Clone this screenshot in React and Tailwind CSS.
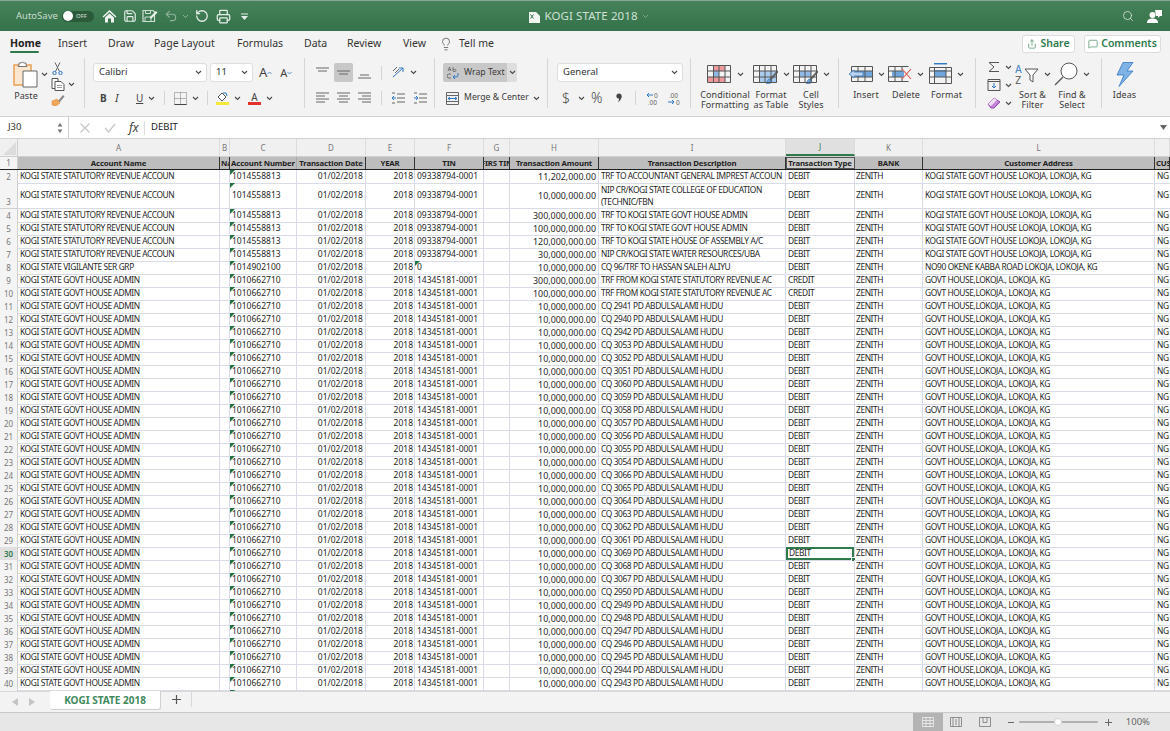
import { Save, Printer, Undo2, RotateCcw, Search, Share, MessageSquare, Lightbulb } from 'lucide-react';

const GRID = 'grid grid-cols-[18px_202px_10px_67px_69px_49px_69px_26px_89px_187px_69px_68px_232px_15px]';
const UI = "font-['Inter','Liberation_Sans',sans-serif]";
const LABEL = "font-['Roboto','Liberation_Sans',sans-serif] text-[9px] leading-[10px] text-[#3a3a3a] text-center tracking-[0.1px]";

const STAT = 'KOGI STATE STATUTORY REVENUE ACCOUN';
const ADMIN = 'KOGI STATE GOVT HOUSE ADMIN';
const LOK1 = 'KOGI STATE GOVT HOUSE LOKOJA, LOKOJA, KG';
const LOK2 = 'GOVT HOUSE,LOKOJA., LOKOJA, KG';

const cheques = [2941, 2940, 2942, 3053, 3052, 3051, 3060, 3059, 3058, 3057, 3056, 3055, 3054, 3066, 3065, 3064, 3063, 3062, 3061, 3069, 3068, 3067, 2950, 2949, 2948, 2947, 2946, 2945, 2944, 2943];

const rows = [
  { n: 2, a: STAT, c: '1014558813', f: '09338794-0001', h: '11,202,000.00', i: 'TRF TO ACCOUNTANT GENERAL IMPREST ACCOUN', j: 'DEBIT', l: LOK1 },
  { n: 3, a: STAT, c: '1014558813', f: '09338794-0001', h: '10,000,000.00', i: 'NIP CR/KOGI STATE COLLEGE OF EDUCATION (TECHNIC/FBN', j: 'DEBIT', l: LOK1, tall: true },
  { n: 4, a: STAT, c: '1014558813', f: '09338794-0001', h: '300,000,000.00', i: 'TRF TO KOGI STATE GOVT HOUSE ADMIN', j: 'DEBIT', l: LOK1 },
  { n: 5, a: STAT, c: '1014558813', f: '09338794-0001', h: '100,000,000.00', i: 'TRF TO KOGI STATE GOVT HOUSE ADMIN', j: 'DEBIT', l: LOK1 },
  { n: 6, a: STAT, c: '1014558813', f: '09338794-0001', h: '120,000,000.00', i: 'TRF TO KOGI STATE HOUSE OF ASSEMBLY A/C', j: 'DEBIT', l: LOK1 },
  { n: 7, a: STAT, c: '1014558813', f: '09338794-0001', h: '30,000,000.00', i: 'NIP CR/KOGI STATE WATER RESOURCES/UBA', j: 'DEBIT', l: LOK1 },
  { n: 8, a: 'KOGI STATE VIGILANTE SER GRP', c: '1014902100', f: '0', h: '10,000,000.00', i: 'CQ 96/TRF TO HASSAN SALEH ALIYU', j: 'DEBIT', l: 'NO90 OKENE KABBA ROAD LOKOJA, LOKOJA, KG', tinFlag: true },
  { n: 9, a: ADMIN, c: '1010662710', f: '14345181-0001', h: '300,000,000.00', i: 'TRF FROM KOGI STATE STATUTORY REVENUE AC', j: 'CREDIT', l: LOK2 },
  { n: 10, a: ADMIN, c: '1010662710', f: '14345181-0001', h: '100,000,000.00', i: 'TRF FROM KOGI STATE STATUTORY REVENUE AC', j: 'CREDIT', l: LOK2 },
  ...cheques.map((q, idx) => ({
    n: idx + 11, a: ADMIN, c: '1010662710', f: '14345181-0001', h: '10,000,000.00',
    i: `CQ ${q} PD ABDULSALAMI HUDU`, j: 'DEBIT', l: LOK2,
  })),
  { n: 41, a: ADMIN, c: '1010662710', f: '14345181-0001', h: '10,000,000.00', i: 'CQ 2939 PD ABDULSALAMI HUDU', j: 'DEBIT', l: LOK2 },
];

const letters = ['A', 'B', 'C', 'D', 'E', 'F', 'G', 'H', 'I', 'J', 'K', 'L', ''];
const titles = ['Account Name', 'Name', 'Account Number', 'Transaction Date', 'YEAR', 'TIN', 'FIRS TIN', 'Transaction Amount', 'Transaction Description', 'Transaction Type', 'BANK', 'Customer Address', 'CUSTOMER'];

const Caret = ({ className = '' }) => (
  <svg width="7" height="5" viewBox="0 0 7 5" fill="none" className={`shrink-0 ${className}`}>
    <path d="M1 1l2.5 2.5L6 1" stroke="#4a4a4a" strokeWidth="1.1" />
  </svg>
);

const Ico = ({ w, h, children, className = '' }) => (
  <svg width={w} height={h} viewBox={`0 0 ${w} ${h}`} fill="none" className={`shrink-0 ${className}`}>{children}</svg>
);

const Lines = ({ rows: ys, className = '' }) => (
  <Ico w={13} h={14} className={className}>
    {ys.map(([y, x1, x2]) => <path key={y} d={`M${x1} ${y}H${x2}`} stroke="#666" strokeWidth="1" />)}
  </Ico>
);

const TableIcon = ({ children }) => (
  <Ico w={25} h={20}>
    {children}
    <path d="M.5 1.5h23v17H.5zM.5 7h23M.5 13h23M6.5 1.5v17M12 1.5v17M18 1.5v17" stroke="#555" strokeWidth="1" />
  </Ico>
);

const Brush = () => (
  <g>
    <path d="M25 7L17 16" stroke="#666" strokeWidth="2" />
    <path d="M17 15c-2 0-3 2-3.5 5 3 0 5-1 5.500-3z" fill="#6ba3dc" stroke="#3a78b8" strokeWidth=".7" />
  </g>
);

const BigTool = ({ width, label, icon }) => (
  <div className={`flex flex-col items-center ${width}`}>
    <div className="flex items-center gap-[5px] h-[28px] pt-[4px] shrink-0">
      {icon}
      <Caret />
    </div>
    <div className={`${LABEL} mt-[4px] shrink-0`}>{label}</div>
  </div>
);

const TitleBar = () => (
  <div className="h-[31px] shrink-0 border-t border-[#86a892] bg-gradient-to-b from-[#47815a] to-[#33724a] flex items-center text-[#e4eee7]">
    <div className="flex-1 flex items-center pl-[16px]">
      <span className={`${UI} text-[9.5px] text-[#c9dccf] w-[46px]`}>AutoSave</span>
      <div className="w-[32px] h-[11px] rounded-full bg-[#2b5a3b] flex items-center pl-[1px]">
        <div className="w-[10px] h-[10px] rounded-full bg-white" />
        <span className={`${UI} text-[6px] ml-[3px] text-[#c9dccf] font-medium`}>OFF</span>
      </div>
      <Ico w={15} h={14} className="ml-[8px]">
        <path d="M7.500 1L.5 7.500l1 1L7.500 3l6 5.500 1-1z" fill="#f0f5f2" />
        <path d="M3 8.500L7.500 4.500 12 8.500V13.500H9V9.500H6v4H3z" fill="#f0f5f2" />
      </Ico>
      <Save size={14} strokeWidth={2} className="ml-[6px]" />
      <Ico w={16} h={14} className="ml-[5px]">
        <path d="M1 1.500h10l1.500 1.500v9.500H1z" stroke="#cfdfd4" strokeWidth="1.200" />
        <path d="M3 8h6v4.500H3zM3.500 1.500v3h5v-3" stroke="#cfdfd4" />
        <path d="M8 8l6-6 1.500 1.500-6 6H8z" fill="#e9f1ec" />
      </Ico>
      <Undo2 size={14} strokeWidth={2} className="ml-[6px] text-[#8fb29c]" />
      <Ico w={7} h={5} className="ml-[4px]"><path d="M1 1l2.500 2.500L6 1" stroke="#8fb29c" /></Ico>
      <RotateCcw size={14} strokeWidth={2.2} className="ml-[6px]" />
      <Printer size={15} strokeWidth={2} className="ml-[7px]" />
      <Ico w={7} h={7} className="ml-[10px]">
        <path d="M0 1h7" stroke="#e4eee7" /><path d="M0 3h7L3.500 7z" fill="#e4eee7" />
      </Ico>
    </div>
    <div className="flex items-center gap-[4px] justify-center">
      <Ico w={11} h={13}>
        <path d="M0 2h7l4 4v7H0z" fill="#f2f6f3" />
        <path d="M1.500 4.500l3 4M4.500 4.500l-3 4" stroke="#33724a" />
      </Ico>
      <span className={`${UI} text-[11.5px] text-[#cfe0d5] tracking-[0.1px]`}>KOGI STATE 2018</span>
      <Ico w={7} h={5}><path d="M1 1l2.500 2.500L6 1" stroke="#7fa68d" /></Ico>
    </div>
    <div className="flex-1 flex items-center justify-end pr-[8px] gap-[13px]">
      <Search size={12} strokeWidth={1.5} />
      <Ico w={15} h={15}>
        <circle cx="5.500" cy="6" r="3" fill="#fff" />
        <path d="M0 14c0-3.500 2.500-4.500 5.500-4.500S11 10.500 11 14z" fill="#fff" />
        <path d="M8 1h7v6h-2l-2 2V7H9z" fill="#fff" />
      </Ico>
    </div>
  </div>
);

const Tabs = () => {
  const tabs = [
    ['Home', 'w-[29px] ml-[10px]'],
    ['Insert', 'w-[30px] ml-[19px]'],
    ['Draw', 'w-[26px] ml-[20px]'],
    ['Page Layout', 'w-[62px] ml-[20px]'],
    ['Formulas', 'w-[46px] ml-[21px]'],
    ['Data', 'w-[23px] ml-[21px]'],
    ['Review', 'w-[35px] ml-[20px]'],
    ['View', 'w-[23px] ml-[21px]'],
  ];
  return (
    <div className={`h-[25px] flex items-center ${UI} text-[10.5px] text-[#333] bg-[#f3f3f3]`}>
      {tabs.map(([name, cls], i) => (
        <div key={name} className={`relative whitespace-nowrap ${cls} ${i === 0 ? 'font-bold text-[#222]' : ''}`}>
          {name}
          {i === 0 && <div className="absolute left-0 right-0 top-[15px] h-[2px] rounded-full bg-[#2f7a4c]" />}
        </div>
      ))}
      <Lightbulb size={14} strokeWidth={1.2} className="ml-[13px] text-[#444]" />
      <span className="ml-[6px]">Tell me</span>
      <div className="ml-auto mr-[9px] flex gap-[9px] text-[#2f7a4c] font-semibold">
        <div className="w-[53px] h-[18px] rounded-[3px] border border-[#dcdcdc] bg-white flex items-center justify-center gap-[3px]">
          <Share size={10} strokeWidth={1.5} />Share
        </div>
        <div className="w-[77px] h-[18px] rounded-[3px] border border-[#dcdcdc] bg-white flex items-center justify-center gap-[3px]">
          <MessageSquare size={10} strokeWidth={1.5} />Comments
        </div>
      </div>
    </div>
  );
};

const Select = ({ text, width }) => (
  <div className={`${width} h-[19px] rounded-[3px] bg-white border border-[#dedede] flex items-center justify-between pl-[5px] pr-[4px] ${UI} text-[9.5px] text-[#333]`}>
    {text}<Caret />
  </div>
);

const VLine = ({ className = '' }) => <div className={`w-px h-[14px] bg-[#d4d4d4] shrink-0 ${className}`} />;

const ClipboardGroup = () => (
  <div className="w-[85px] h-[50px] border-r border-[#d6d6d6] shrink-0 flex">
    <div className="pl-[13px] w-[49px] shrink-0">
      <div className="flex items-center gap-[3px] mt-[3px]">
        <Ico w={25} h={27}>
          <path d="M1 4h17v20H1z" fill="#fbe7cf" stroke="#e8a155" strokeWidth="1.500" />
          <path d="M6 4V2h2a2 2 0 0 1 3 0h2v2l1 1.500H5z" fill="#fff" stroke="#777" />
          <path d="M10 10h14v16H10z" fill="#fff" stroke="#666" />
        </Ico>
        <Caret />
      </div>
      <div className={`${LABEL} w-[26px] mt-[3px]`}>Paste</div>
    </div>
    <div className="flex flex-col pl-[2px] pt-[4px] gap-[3px]">
      <Ico w={11} h={13} className="ml-[1px]">
        <path d="M3 .5l4.500 9M8 .5L3.500 9.500" stroke="#666" />
        <circle cx="2.500" cy="11" r="1.700" stroke="#2f78c4" />
        <circle cx="8.500" cy="11" r="1.700" stroke="#2f78c4" />
      </Ico>
      <div className="flex items-center gap-[3px]">
        <Ico w={14} h={13}>
          <path d="M1 .5h6v10H1z" fill="#fff" stroke="#555" />
          <path d="M4 3.500h6l3 3v6H4z" fill="#fff" stroke="#555" />
          <path d="M6 7.500h5M6 9.500h5" stroke="#888" strokeWidth=".8" />
        </Ico>
        <Caret />
      </div>
      <Ico w={14} h={12}>
        <path d="M7 7l5-6 1.500 1.500-5 6z" fill="#888" />
        <path d="M1 7l5-2 3 4-4 3H2l1-2-2 1z" fill="#f0a85c" stroke="#d98432" strokeWidth=".5" />
      </Ico>
    </div>
  </div>
);

const FontGroup = () => (
  <div className="w-[220px] h-[50px] border-r border-[#d6d6d6] shrink-0 pl-[8px] pt-[5px]">
    <div className="flex items-center">
      <Select text="Calibri" width="w-[114px]" />
      <Select text="11" width="w-[43px] ml-[3px]" />
      <span className={`${UI} text-[13px] text-[#444] ml-[6px] leading-none`}>A</span>
      <Ico w={5} h={4}><path d="M.5 3l2-2 2 2" stroke="#2f78c4" strokeWidth=".8" /></Ico>
      <span className={`${UI} text-[11px] text-[#444] ml-[8px] leading-none`}>A</span>
      <Ico w={5} h={4}><path d="M.5 1l2 2 2-2" stroke="#2f78c4" strokeWidth=".8" /></Ico>
    </div>
    <div className={`flex items-center mt-[8px] h-[16px] pl-[7px] ${UI} text-[#444]`}>
      <span className="text-[10px] font-bold w-[15px]">B</span>
      <span className="text-[11px] italic w-[21px] font-['Liberation_Serif',serif]">I</span>
      <span className="text-[10px] underline w-[11px]">U</span>
      <Caret className="ml-[1px]" />
      <VLine className="ml-[9px]" />
      <Ico w={13} h={13} className="ml-[9px]">
        <path d="M.5.5h12v12H.5zM6.500.5v12M.5 6.500h12" stroke="#777" strokeDasharray="1 1" />
        <path d="M.5 12.500h12" stroke="#444" />
      </Ico>
      <Caret className="ml-[5px]" />
      <VLine className="ml-[8px]" />
      <div className="ml-[8px] w-[13px] flex flex-col items-center">
        <Ico w={13} h={10}>
          <path d="M2 5l4-4 4 4-4 4z" fill="#fff" stroke="#555" />
          <path d="M7 1h3l1 3" stroke="#2f78c4" />
        </Ico>
        <div className="w-[13px] h-[3px] bg-[#f5e63a]" />
      </div>
      <Caret className="ml-[5px]" />
      <div className="ml-[7px] w-[13px] flex flex-col items-center">
        <span className="text-[10px] leading-[10px]">A</span>
        <div className="w-[13px] h-[3px] bg-[#e4312b]" />
      </div>
      <Caret className="ml-[5px]" />
    </div>
  </div>
);

const AlignGroup = () => (
  <div className="w-[130px] h-[50px] border-r border-[#d6d6d6] shrink-0 pl-[11px] pt-[5px]">
    <div className="flex items-center h-[19px]">
      <Lines rows={[[2, 0, 13], [5, 2, 11]]} />
      <div className="ml-[5px] w-[19px] h-[19px] rounded-[2px] bg-[#c8c8c8] flex items-center justify-center">
        <Lines rows={[[5, 0, 13], [8, 2, 11]]} />
      </div>
      <Ico w={13} h={14} className="ml-[5px] mt-[3px]">
        <path d="M2 8h9M0 11h13" stroke="#666" />
      </Ico>
      <VLine className="ml-[10px]" />
      <Ico w={13} h={13} className="ml-[10px]">
        <path d="M1 11L11 2M11 2H7M11 2v4" stroke="#2f78c4" strokeWidth="1" />
        <path d="M1 5l4-4M3 7l4-4" stroke="#666" />
      </Ico>
      <Caret className="ml-[5px]" />
    </div>
    <div className="flex items-center mt-[8px] h-[16px]">
      <Lines rows={[[2, 0, 13], [5, 0, 9], [8, 0, 13], [11, 0, 9]]} />
      <Lines className="ml-[8px]" rows={[[2, 0, 13], [5, 2, 11], [8, 0, 13], [11, 2, 11]]} />
      <Lines className="ml-[8px]" rows={[[2, 0, 13], [5, 4, 13], [8, 0, 13], [11, 4, 13]]} />
      <VLine className="ml-[10px]" />
      <Ico w={13} h={12} className="ml-[10px]">
        <path d="M5 2h8M5 6h8M5 10h8M0 1h3M0 11h3" stroke="#666" />
        <path d="M4 6H0M2 4L0 6l2 2" stroke="#2f78c4" />
      </Ico>
      <Ico w={13} h={12} className="ml-[9px]">
        <path d="M5 2h8M5 6h8M5 10h8M0 1h3M0 11h3" stroke="#666" />
        <path d="M0 6h4M2 4l2 2-2 2" stroke="#2f78c4" />
      </Ico>
    </div>
  </div>
);

const WrapGroup = () => (
  <div className={`w-[113px] h-[50px] border-r border-[#d6d6d6] shrink-0 pl-[8px] pt-[5px] ${UI} text-[8.7px] text-[#3a3a3a]`}>
    <div className="w-[74px] h-[19px] flex rounded-[2px] overflow-hidden">
      <div className="w-[64px] bg-[#c8c8c8] flex items-center pl-[4px] gap-[5px]">
        <Ico w={12} h={14}>
          <path d="M1 5l1.500-4L4 5M1.500 3.800h2.500M6 1v4M6 3.500h2a1 1 0 0 1 0 2H6" stroke="#666" strokeWidth=".8" />
          <path d="M4 8H2a2 2 0 0 0 0 4h2" stroke="#666" strokeWidth=".9" />
          <path d="M11 7v2a2 2 0 0 1-2 2H6M8 9l-2 2 2 2" stroke="#2f78c4" />
        </Ico>
        <span className="whitespace-nowrap">Wrap Text</span>
      </div>
      <div className="w-[10px] bg-[#dedede] flex items-center justify-center"><Caret /></div>
    </div>
    <div className="flex items-center mt-[8px] h-[16px] pl-[3px]">
      <Ico w={13} h={13}>
        <path d="M.5.5h12v12H.5zM.5 3.500h12M.5 9.500h12" stroke="#666" />
        <path d="M2 6.500h9M4 5L2 6.500 4 8M9 5l2 1.500L9 8" stroke="#2f78c4" />
      </Ico>
      <span className="ml-[5px] whitespace-nowrap">Merge &amp; Center</span>
      <Caret className="ml-[4px]" />
    </div>
  </div>
);

const NumberGroup = () => (
  <div className={`w-[143px] h-[50px] border-r border-[#d6d6d6] shrink-0 pl-[9px] pt-[5px] ${UI} text-[#444]`}>
    <Select text="General" width="w-[126px]" />
    <div className="flex items-center mt-[8px] h-[16px] pl-[5px]">
      <span className="text-[14px] font-light w-[14px] leading-none">$</span>
      <Caret className="ml-[2px]" />
      <span className="text-[14px] font-light ml-[6px] w-[13px] leading-none">%</span>
      <Ico w={6} h={10} className="ml-[12px]">
        <circle cx="3" cy="3" r="2.600" fill="#444" />
        <path d="M5.600 3c0 3-1.500 5-3.800 6.500 1-1.500 1.300-3 1.200-4z" fill="#444" />
      </Ico>
      <VLine className="ml-[13px]" />
      <Ico w={14} h={13} className="ml-[10px]">
        <path d="M7 3H1M3 1L1 3l2 2" stroke="#2f78c4" />
        <text x="8" y="5.500" fontSize="6" fill="#555" fontFamily="Inter">0</text>
        <text x="2" y="12.500" fontSize="6" fill="#555" fontFamily="Inter">.00</text>
      </Ico>
      <Ico w={14} h={13} className="ml-[7px]">
        <text x="2" y="5.500" fontSize="6" fill="#555" fontFamily="Inter">.00</text>
        <path d="M1 10h6M5 8l2 2-2 2" stroke="#2f78c4" />
        <text x="9" y="12.500" fontSize="6" fill="#555" fontFamily="Inter">0</text>
      </Ico>
    </div>
  </div>
);

const StylesGroup = () => (
  <div className="w-[148px] h-[50px] border-r border-[#d6d6d6] shrink-0 flex pl-[10px]">
    <BigTool width="w-[48px]" label={<>Conditional<br />Formatting</>} icon={
      <TableIcon>
        <path d="M6 1h12v6H6zM1 13h17v6H1z" fill="#ee9a9d" />
        <path d="M6 7h6v6H6z" fill="#8fb9e6" />
      </TableIcon>
    } />
    <BigTool width="w-[44px]" label={<>Format<br />as Table</>} icon={
      <TableIcon>
        <path d="M6 7h18v12H6z" fill="#a9cbee" />
        <Brush />
      </TableIcon>
    } />
    <BigTool width="w-[36px]" label={<>Cell<br />Styles</>} icon={
      <TableIcon>
        <path d="M6 7h12v6H6z" fill="#8fb9e6" />
        <Brush />
      </TableIcon>
    } />
  </div>
);

const CellsGroup = () => (
  <div className="w-[137px] h-[50px] border-r border-[#d6d6d6] shrink-0 flex pl-[7px]">
    <BigTool width="w-[40px]" label="Insert" icon={
      <Ico w={25} h={20}>
        <path d="M7 7h18v6H7z" fill="#6ea6dd" />
        <path d="M3.500 2.500h21v15h-21zM3.500 7h21M3.500 13h21M10 2.500v15M17 2.500v15" stroke="#555" />
        <path d="M1 10l5-4v2h9v4H6v2z" fill="#b9d3ee" stroke="#3a78b8" strokeWidth=".8" />
      </Ico>
    } />
    <BigTool width="w-[40px]" label="Delete" icon={
      <Ico w={24} h={20}>
        <path d="M4 7h12v6H4z" fill="#6ea6dd" />
        <path d="M.5 2.500h20M.5 17.500h20M.5 2.500v15M.5 7h14M.5 13h14M7 2.500v15M14 2.500v4M14 13.500v4" stroke="#555" />
        <path d="M14 5l9 10M23 5l-9 10" stroke="#e2524c" strokeWidth="1.100" />
      </Ico>
    } />
    <BigTool width="w-[41px]" label="Format" icon={
      <Ico w={23} h={22}>
        <path d="M5 .7h13" stroke="#2f78c4" strokeWidth="1.500" />
        <path d="M5 7h12v7H5z" fill="#6ea6dd" />
        <path d="M.5 4.500h22v16H.5zM.5 8h22M.5 14h22M5.500 4.500v16M17 4.500v16" stroke="#555" />
      </Ico>
    } />
  </div>
);

const EditingGroup = () => (
  <div className="w-[126px] h-[50px] border-r border-[#d6d6d6] shrink-0 flex pl-[11px]">
    <div className="w-[26px] flex flex-col pt-[3px] gap-[6px]">
      <div className="flex items-center gap-[4px] h-[12px]">
        <Ico w={14} h={12}><path d="M12 1.500H2l5 4.500-5 4.500h10" stroke="#555" /></Ico>
        <Caret />
      </div>
      <div className="flex items-center gap-[4px] h-[12px]">
        <Ico w={14} h={12}>
          <path d="M1 .5h12v11H1zM1 2.500h12" stroke="#555" />
          <path d="M7 4v5M5 7l2 2 2-2" stroke="#2f78c4" />
        </Ico>
        <Caret />
      </div>
      <div className="flex items-center gap-[4px] h-[12px]">
        <Ico w={14} h={12}>
          <path d="M1 7l6-6 6 4-6 6H4z" fill="#c184d6" stroke="#9246ad" />
          <path d="M1 7l6-6 3 2-6 6" fill="#efe0f4" />
        </Ico>
        <Caret />
      </div>
    </div>
    <BigTool width="w-[39px]" label={<>Sort &amp;<br />Filter</>} icon={
      <Ico w={24} h={22}>
        <text x="0" y="10" fontSize="10" fill="#2f78c4" fontFamily="Inter">A</text>
        <text x="0" y="21" fontSize="10" fill="#555" fontFamily="Inter">Z</text>
        <path d="M10 6h13l-5 6v7l-3-2v-5z" fill="#fff" stroke="#555" />
      </Ico>
    } />
    <BigTool width="w-[40px]" label={<>Find &amp;<br />Select</>} icon={
      <Ico w={24} h={24}>
        <circle cx="15" cy="9" r="8" fill="#fff" stroke="#555" />
        <path d="M9 15L1 23" stroke="#555" strokeWidth="1.200" />
      </Ico>
    } />
  </div>
);

const IdeasGroup = () => (
  <div className="w-[45px] shrink-0 flex flex-col items-center">
    <div className="mt-[4px] h-[25px]">
      <Ico w={18} h={25}>
        <path d="M7 .5h10L11 9h6L3 24.500 8 13H1z" fill="#7fb2e5" stroke="#2f78c4" strokeWidth=".8" />
      </Ico>
    </div>
    <div className={`${LABEL} mt-[3px]`}>Ideas</div>
  </div>
);

const Ribbon = () => (
  <div className="h-[60px] shrink-0 bg-[#f3f3f3] pt-[2px] flex">
    <ClipboardGroup />
    <FontGroup />
    <AlignGroup />
    <WrapGroup />
    <NumberGroup />
    <StylesGroup />
    <CellsGroup />
    <EditingGroup />
    <IdeasGroup />
  </div>
);

const FormulaBar = () => (
  <div className="h-[23px] shrink-0 flex bg-white border-t border-b border-[#d2d2d2]">
    <div className={`w-[69px] shrink-0 flex items-center justify-between pl-[8px] pr-[5px] border-r border-[#cfcfcf] bg-white ${UI} text-[9.5px] text-[#333]`}>
      J30
      <Ico w={6} h={12}><path d="M3 1l2.500 3.500h-5zM3 11L.5 7.500h5z" fill="#777" /></Ico>
    </div>
    <div className="flex items-center pl-[11px] flex-1">
      <Ico w={10} h={10}><path d="M.5.5l9 9M9.500.5l-9 9" stroke="#c8c8c8" strokeWidth="1.300" /></Ico>
      <Ico w={12} h={10} className="ml-[14px]"><path d="M1 5l3.500 4L11 1" stroke="#c8c8c8" strokeWidth="1.300" /></Ico>
      <span className="ml-[13px] w-[12px] text-[12px] italic text-[#444] font-['Liberation_Serif',serif]">fx</span>
      <div className="ml-[3px] w-px h-[14px] bg-[#dcdcdc]" />
      <span className={`ml-[6px] ${UI} text-[9.5px] text-[#222]`}>DEBIT</span>
      <Ico w={7} h={5} className="ml-auto mr-[3px]"><path d="M0 0h7L3.500 5z" fill="#666" /></Ico>
    </div>
  </div>
);

const Flag = () => (
  <div className="absolute left-0 top-0 w-0 h-0 border-t-[5px] border-r-[5px] border-t-[#217346] border-r-transparent" />
);

const cell = "relative flex items-center min-w-0 border-r border-b border-[#d9dbe9]";
const clip = `${cell} overflow-hidden`;
const nums = "whitespace-nowrap tracking-normal text-[8.5px]";
const words = "whitespace-nowrap tracking-[-0.4px]";

const Sheet = () => (
  <div className="flex-1 min-h-0 overflow-hidden bg-white font-['Lato','Liberation_Sans',sans-serif] text-[8.4px] text-[#1f1f1f]">
    <div className={`${GRID} h-[18px] bg-[#f0f0f0] border-b border-[#d0d0d0] ${UI} text-[8px] text-[#777]`}>
      <div className="relative overflow-hidden border-r border-[#d0d0d0]">
        <div className="absolute right-[1px] bottom-[1px] w-0 h-0 border-b-[13px] border-l-[13px] border-b-[#dcdcdc] border-l-transparent" />
      </div>
      {letters.map(l => (
        <div key={l} className={`flex items-center justify-center border-r border-[#dcdcdc] ${l === 'J' ? 'bg-[#dfe0df] text-[#2f7a4c] border-b-2 border-b-[#2f7a4c]' : ''}`}>{l}</div>
      ))}
    </div>

    <div className={`${GRID} h-[13px] border-b border-[#222]`}>
      <div className={`flex items-center justify-center border-r border-[#d0d0d0] bg-[#f4f4f4] ${UI} text-[8px] text-[#777]`}>1</div>
      {titles.map((t, i) => (
        <div key={t} className={`flex min-w-0 items-center overflow-hidden whitespace-nowrap pt-px font-bold text-[7.8px] tracking-[-0.15px] border-r ${i === 2 ? 'border-[#aaa]' : 'border-[#333]'} ${t === 'Name' || t === 'CUSTOMER' ? 'pl-[1px]' : 'justify-center'} ${i === 9 ? 'bg-[#cfcfcf] outline outline-[#555] -outline-offset-1' : 'bg-[#bdbdbd]'}`}>{t}</div>
      ))}
    </div>

    {rows.map(r => {
      const active = r.n === 30;
      return (
        <div key={r.n} className={`${GRID} ${r.tall ? 'h-[26px]' : 'h-[13px]'}`}>
          <div className={`flex justify-center border-r border-b border-[#d0d0d0] ${UI} text-[8px] ${r.tall ? 'items-end' : 'items-center pt-[1px]'} ${active ? 'bg-[#dfe0df] text-[#2f7a4c] font-semibold' : 'bg-[#f4f4f4] text-[#777]'}`}>{r.n}</div>
          <div className={`${clip} ${words} pl-[2px]`}>{r.a}</div>
          <div className={cell} />
          <div className={`${clip} ${nums} pl-[2px]`}><Flag />{r.c}</div>
          <div className={`${clip} ${nums} justify-end pr-[2px]`}>01/02/2018</div>
          <div className={`${clip} ${nums} justify-end pr-[1px]`}>2018</div>
          <div className={`${clip} ${nums} pl-[2px]`}>{r.tinFlag && <Flag />}{r.f}</div>
          <div className={cell} />
          <div className={`${clip} whitespace-nowrap text-[8.9px] justify-end pr-[2px]`}>{r.h}</div>
          <div className={`${clip} pl-[2px] tracking-[-0.4px] ${r.tall ? 'leading-[12px]' : 'whitespace-nowrap'}`}>{r.i}</div>
          <div className={`${cell} ${words} ${active ? 'pl-[3px]' : 'pl-[2px]'}`}>
            {r.j}
            {active && (
              <div className="absolute inset-0 border-2 border-[#2f7a4c]">
                <div className="absolute -right-[3px] -bottom-[3px] w-[4px] h-[4px] bg-[#2f7a4c] border-l border-t border-white" />
              </div>
            )}
          </div>
          <div className={`${clip} ${words} pl-[1px]`}>ZENITH</div>
          <div className={`${clip} ${words} pl-[2px]`}>{r.l}</div>
          <div className={`${clip} ${words} pl-[2px] border-r-0`}>NG</div>
        </div>
      );
    })}
  </div>
);

const TabBar = () => (
  <div className="h-[22px] shrink-0 bg-[#f3f3f3] border-t border-[#d8d8d8] border-b border-b-[#c9c9c9] flex">
    <div className="w-[50px] flex items-center pl-[12px] gap-[11px]">
      <Ico w={6} h={8}><path d="M6 0v8L0 4z" fill="#c4c4c4" /></Ico>
      <Ico w={6} h={8}><path d="M0 0v8l6-4z" fill="#c4c4c4" /></Ico>
    </div>
    <div className="w-[111px] h-[19px] -mt-px bg-white rounded-b-[3px] border-r border-b border-[#cfcfcf] flex items-center justify-center font-['Liberation_Sans',sans-serif] font-bold text-[10px] text-[#3f8a5c]">
      KOGI STATE 2018
    </div>
    <div className="w-[31px] h-[15px] border-r border-[#d8d8d8] flex items-center justify-center text-[#555]">
      <Ico w={9} h={9}><path d="M4.500 0v9M0 4.500h9" stroke="#555" strokeWidth="1.200" /></Ico>
    </div>
  </div>
);

const StatusBar = () => (
  <div className={`h-[18px] shrink-0 bg-[#e7e7e7] flex justify-end items-center ${UI} text-[9.5px] text-[#666]`}>
    <div className="w-[30px] h-full bg-[#b4b4b4] flex items-center justify-center">
      <Ico w={12} h={10}><path d="M.5.5h11v9H.5zM.5 3.500h11M.5 6.500h11M4 .5v9M8 .5v9" stroke="#f0f0f0" strokeWidth=".8" /></Ico>
    </div>
    <Ico w={12} h={10} className="ml-[7px]"><path d="M.5.5h11v9H.5zM3 .5v9M9 .5v9M5 3h2M5 5h2M5 7h2" stroke="#777" strokeWidth=".8" /></Ico>
    <Ico w={12} h={10} className="ml-[17px]"><path d="M.5.5h11v9H.5zM4 .5v5h4v-5" stroke="#777" strokeWidth=".8" /></Ico>
    <div className="ml-[17px] w-[6px] h-px bg-[#666]" />
    <div className="ml-[5px] relative w-[79px] h-[2px] rounded-full bg-[#b0b0b0]">
      <div className="absolute left-[35px] -top-[3px] w-[8px] h-[8px] rounded-full bg-white border border-[#d4d4d4]" />
    </div>
    <Ico w={7} h={7} className="ml-[7px]"><path d="M3.500 0v7M0 3.500h7" stroke="#666" /></Ico>
    <span className="ml-[14px] mr-[20px]">100%</span>
  </div>
);

export default function App() {
  return (
    <div className="w-[1170px] h-[731px] overflow-hidden flex flex-col bg-[#f3f3f3]">
      <TitleBar />
      <Tabs />
      <Ribbon />
      <FormulaBar />
      <Sheet />
      <TabBar />
      <StatusBar />
    </div>
  );
}
